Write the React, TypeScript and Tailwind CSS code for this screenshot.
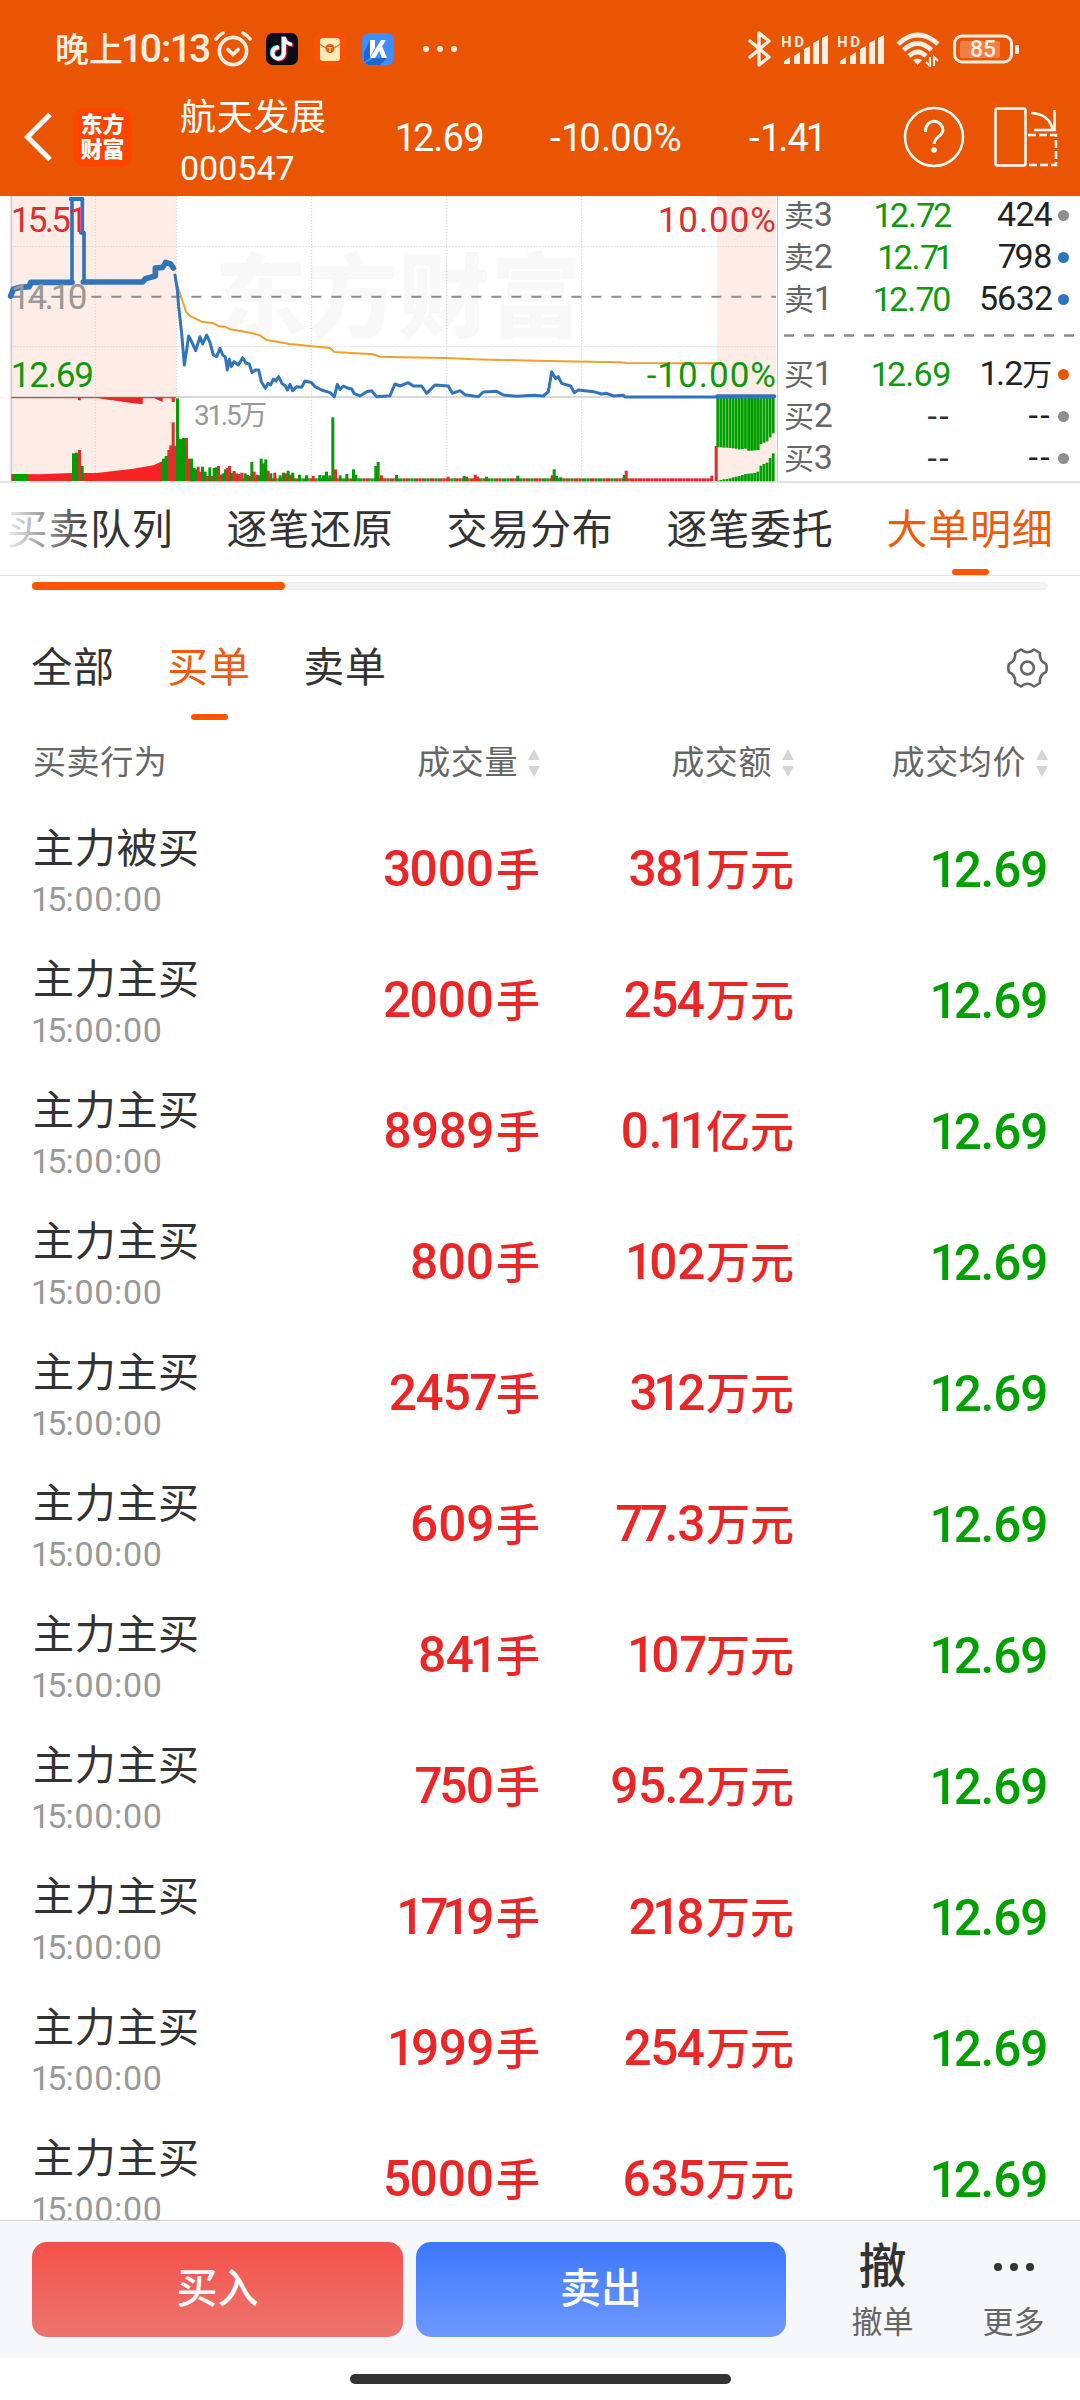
import React from "react";

type Trade = { action: string; volume: string; amount: string; unit: string };

const trades: Trade[] = [
  { action: "主力被买", volume: "3000", amount: "381", unit: "万元" },
  { action: "主力主买", volume: "2000", amount: "254", unit: "万元" },
  { action: "主力主买", volume: "8989", amount: "0.11", unit: "亿元" },
  { action: "主力主买", volume: "800", amount: "102", unit: "万元" },
  { action: "主力主买", volume: "2457", amount: "312", unit: "万元" },
  { action: "主力主买", volume: "609", amount: "77.3", unit: "万元" },
  { action: "主力主买", volume: "841", amount: "107", unit: "万元" },
  { action: "主力主买", volume: "750", amount: "95.2", unit: "万元" },
  { action: "主力主买", volume: "1719", amount: "218", unit: "万元" },
  { action: "主力主买", volume: "1999", amount: "254", unit: "万元" },
  { action: "主力主买", volume: "5000", amount: "635", unit: "万元" },
];

const sells = [
  { label: "卖", level: "3", price: "12.72", count: "424", unit: "", dot: "bg-[#8e8e93]" },
  { label: "卖", level: "2", price: "12.71", count: "798", unit: "", dot: "bg-[#2f74c0]" },
  { label: "卖", level: "1", price: "12.70", count: "5632", unit: "", dot: "bg-[#2f74c0]" },
];

const buys = [
  { label: "买", level: "1", price: "12.69", count: "1.2", unit: "万", dot: "bg-[#ea5504]" },
  { label: "买", level: "2", price: "--", count: "--", unit: "", dot: "bg-[#8e8e93]" },
  { label: "买", level: "3", price: "--", count: "--", unit: "", dot: "bg-[#8e8e93]" },
];

const tabs = ["买卖队列", "逐笔还原", "交易分布", "逐笔委托", "大单明细"];
const filters = ["全部", "买单", "卖单"];

const spacing: Record<string, string> = {
  "1": "-ml-[0.06em] tracking-[-0.08em]",
  "2": "tracking-[-0.03em]",
  "3": "tracking-[-0.03em]",
  "4": "tracking-[-0.02em]",
  "5": "tracking-[-0.03em]",
  "7": "tracking-[-0.07em]",
  "8": "tracking-[-0.01em]",
  "9": "tracking-[-0.01em]",
  ".": "tracking-[-0.02em]",
  ":": "tracking-[0.02em]",
  "-": "tracking-[0.07em]",
};

const Num: React.FC<{ value: string }> = ({ value }) => (
  <span>
    {value.split("").map((c, i) => (
      <span key={i} className={spacing[c]}>
        {c}
      </span>
    ))}
  </span>
);

const Signal = () => (
  <svg width="46" height="34" viewBox="0 0 46 34" fill="#ffeee3">
    <text x="-1" y="14.5" fontSize="15" fontWeight="700" textLength="23" fontFamily="Roboto, sans-serif">HD</text>
    <path d="M2 29l6-4v7H2zM12 24l6-4v12h-6zM22 17l6-3v18h-6zM31 11l6-3v24h-6zM40 6l6-3v29h-6z" />
  </svg>
);

const StatusBar = () => (
  <div className="flex h-[98px] items-center pl-[55px] pr-[61px] text-[#ffeee3]">
    <div className="flex w-[159px] items-baseline whitespace-nowrap font-medium">
      <span className="text-[34px] leading-[48px]">晚上</span>
      <span className="text-[39px] leading-[48px] tracking-[-0.02em]">
        <Num value="10:13" />
      </span>
    </div>
    <svg width="38" height="36" viewBox="0 0 38 36" fill="none" stroke="currentColor" strokeWidth="3.6" strokeLinecap="round">
      <circle cx="19" cy="20" r="13.6" />
      <path d="M2 8q3-4 7-6M36 8q-3-4-7-6M14 18.5l5 5 5-5" />
    </svg>
    <svg className="ml-[14px]" width="32" height="32" viewBox="0 0 32 32" fill="none">
      <rect width="32" height="32" rx="7" fill="#0b0b18" />
      <g strokeWidth="3.6">
        <path d="M13 14.5a5.7 5.7 0 1 0 5 5.7V4" stroke="#25f4ee" transform="translate(-1 -.6)" />
        <path d="M13 14.5a5.7 5.7 0 1 0 5 5.7V4q1 6.5 8 7.5" stroke="#fe2c55" transform="translate(1 .8)" />
        <path d="M13 14.5a5.7 5.7 0 1 0 5 5.7V4q1 6.5 8 7.5" stroke="#fff" />
      </g>
    </svg>
    <svg className="ml-4" width="32" height="32" viewBox="0 0 32 32">
      <rect width="32" height="32" rx="7" fill="#ff4e08" />
      <rect x="6" y="5" width="20" height="23" rx="3" fill="#ffe9b5" />
      <path d="M6 11q10 9 20 0" fill="none" stroke="#d9772b" strokeWidth="1.2" />
      <circle cx="16" cy="15.5" r="4.5" fill="#e85a16" />
      <text x="16" y="18.5" fontSize="8" fontWeight="700" fill="#ffe9b5" textAnchor="middle">T</text>
    </svg>
    <svg className="ml-4" width="32" height="32" viewBox="0 0 32 32">
      <rect width="32" height="32" rx="7" fill="#3f8cff" />
      <path d="M8 7v18L2 29v-9zM12 25h13l-7 7H7a7 7 0 0 1-4-2z" fill="#1f66cf" />
      <path d="M8 7h5v8l-5 9zM19 7h5L13 25H8zM17 17l3-4 5 12h-5z" fill="#fff" />
    </svg>
    <div className="ml-[29px] flex gap-2">
      <i className="size-[6px] rounded-full bg-current" />
      <i className="size-[6px] rounded-full bg-current" />
      <i className="size-[6px] rounded-full bg-current" />
    </div>
    <div className="ml-auto flex items-center">
      <svg width="24" height="38" viewBox="0 0 24 38" fill="none" stroke="currentColor" strokeWidth="3.4" strokeLinejoin="round" strokeLinecap="round">
        <path d="M2 11l19 16-10 8V3l10 8L2 27" />
      </svg>
      <div className="ml-[10px] flex gap-[10px]">
        <Signal />
        <Signal />
      </div>
      <svg className="ml-[12px]" width="44" height="36" viewBox="0 0 44 36" fill="none" stroke="currentColor" strokeWidth="4.6">
        <path d="M2 13q20-18 40 0M7.5 19q14-13 28 0M13 25q8.5-8 17 0" />
        <path d="M17 29q4.5-3 9 0l-4.5 5z" fill="currentColor" stroke="none" />
        <path d="M34 26v9l-4-4M38 35v-9l4 4" strokeWidth="2.2" />
      </svg>
      <svg className="ml-[13px]" width="66" height="30" viewBox="0 0 66 30">
        <rect x="1.5" y="2" width="57" height="26" rx="7.5" fill="none" stroke="currentColor" strokeWidth="3" />
        <rect x="7" y="7" width="40" height="17" rx="2" fill="#fff" opacity=".25" />
        <rect x="62" y="11" width="4" height="9" rx="1.5" fill="currentColor" />
        <text x="30" y="23" fontSize="23" fontWeight="500" fill="currentColor" textAnchor="middle" textLength="26">85</text>
      </svg>
    </div>
  </div>
);

const TitleBar = () => (
  <div className="flex h-[98px] items-center pl-6 pr-[21px] pb-[20px] text-white">
    <svg width="28" height="50" viewBox="0 0 28 50" fill="none" stroke="currentColor" strokeWidth="5">
      <path d="M26 2.5L3.5 25 26 47.5" />
    </svg>
    <div className="ml-[21px] flex h-[59px] w-[59px] flex-col items-center justify-center rounded-[12px] bg-[#ff4400] text-[22px] font-black leading-[25px]">
      <span>东方</span>
      <span>财富</span>
    </div>
    <div className="ml-[48px] flex w-[217px] flex-col pt-[11px]">
      <span className="text-[36px] leading-[50px] tracking-[0.7px]">航天发展</span>
      <span className="text-[34px] leading-[50px]">000547</span>
    </div>
    <div className="flex items-center whitespace-nowrap pt-[2px] text-[38px] leading-[50px] tracking-[-0.02em]">
      <span className="w-[153px]"><Num value="12.69" /></span>
      <span className="w-[199px] tracking-[0.01em]"><Num value="-10.00%" /></span>
      <span><Num value="-1.41" /></span>
    </div>
    <svg className="ml-auto" width="62" height="62" viewBox="0 0 62 62" fill="none" stroke="currentColor" strokeWidth="2.5">
      <circle cx="31" cy="31" r="29" />
      <path d="M22.5 26v-2a8.7 8.7 0 0 1 17.4 0c0 6.5-8.7 6.5-8.7 14" strokeWidth="3" />
      <circle cx="31" cy="44" r="2.8" fill="currentColor" stroke="none" />
    </svg>
    <svg className="ml-[29px]" width="65" height="60" viewBox="0 0 65 60" fill="none" stroke="currentColor" strokeWidth="2.5">
      <rect x="1.5" y="1.5" width="30" height="57" rx="2" />
      <path d="M37 6q19 1 22 18M60.5 3v20H40" />
      <path d="M34 28h28v30H34" strokeDasharray="8 3" />
    </svg>
  </div>
);

// Volume bars: x, top, colour (r = up, g = down)
const volume: [number, number, string][] = [
  [216, 790, "g"], [225, 788, "g"], [234, 780, "r"], [242, 828, "g"],
  [486, 806, "g"], [494, 798, "g"], [502, 780, "r"], [508, 766, "r"], [515, 697, "r"], [521, 768, "r"],
  [528, 625, "g"], [537, 747, "g"], [546, 744, "g"], [555, 744, "r"], [564, 806, "r"], [570, 806, "g"],
  [578, 834, "g"], [585, 838, "g"], [590, 830, "r"], [597, 845, "r"], [603, 830, "g"], [611, 845, "g"], [618, 858, "r"],
  [625, 832, "g"], [632, 858, "r"], [638, 834, "g"], [644, 832, "g"], [651, 828, "r"], [658, 854, "r"],
  [665, 850, "g"], [672, 838, "g"], [678, 834, "r"], [684, 828, "r"], [691, 848, "g"], [698, 843, "r"],
  [705, 850, "r"], [713, 852, "r"], [721, 848, "r"], [731, 850, "g"], [738, 855, "g"], [745, 858, "r"],
  [751, 816, "g"], [758, 845, "r"], [766, 854, "r"], [773, 856, "g"], [779, 806, "g"], [786, 820, "g"],
  [793, 808, "g"], [800, 842, "r"], [808, 850, "g"], [820, 848, "r"], [836, 856, "g"], [846, 848, "g"],
  [853, 850, "r"], [860, 842, "g"], [867, 854, "r"], [874, 848, "g"], [894, 854, "g"], [915, 856, "g"],
  [935, 858, "r"], [955, 855, "g"], [966, 856, "g"], [975, 845, "g"], [985, 856, "g"], [994, 682, "g"],
  [1002, 838, "r"], [1016, 856, "g"], [1036, 852, "g"], [1056, 838, "g"], [1063, 854, "g"], [1123, 828, "g"],
  [1130, 816, "g"], [1140, 856, "r"], [1185, 855, "g"], [1340, 860, "r"], [1388, 858, "g"], [1395, 860, "r"],
  [1421, 854, "r"], [1428, 860, "r"], [1455, 860, "g"], [1549, 857, "g"], [1652, 856, "r"], [1658, 838, "g"],
  [1665, 858, "g"], [1678, 862, "g"], [1868, 855, "g"], [1874, 842, "r"], [2131, 857, "r"], [2144, 768, "r"],
];

// Closing auction: matched (top) and unmatched (bottom) bars
const hanging = [772, 772, 773, 773, 774, 775, 776, 778, 777, 776, 782, 782, 781, 780, 762, 758, 754, 742, 730];
const rising = [872, 870, 868, 867, 865, 862, 860, 858, 855, 852, 851, 850, 849, 845, 827, 822, 818, 804, 790];

const Chart = () => (
  <svg className="shrink-0" width="777" height="287" viewBox="0 18 2331 861" fontFamily="Roboto, 'Noto Sans CJK SC', sans-serif">
    <rect x="34" y="18" width="494" height="858" fill="#feede6" />
    <rect x="2151" y="18" width="177" height="858" fill="#feede6" />
    <text x="645" y="420" fontSize="274" fontWeight="900" fill="#f8f8f8" textLength="1100">东方财富</text>
    <g stroke="#d2d2d2" strokeWidth="3" strokeDasharray="4 5">
      <path d="M286 18V876M529 18V876M935 18V876M1340 18V876M1745 18V876M34 170H2328M34 470H2328" />
    </g>
    <path d="M34 18V876M34 621H2328" stroke="#ccc" strokeWidth="5" />
    <path d="M34 320H2328" stroke="#8b8b8b" strokeWidth="6" strokeDasharray="30 30" />

    <path d="M34 852L120 853 210 849 290 849 400 836 460 826 490 812 528 766V873H34z" fill="#f52323" />
    <path d="M38 852h46v21H38z" fill="#00a000" />
    <path d="M34 621H528v4H34z" fill="#d84a4a" />
    <path d="M290 623H428v20q-80-10-138-20zM466 623h22v13l-22-10zM515 623h9v13h-9zM234 623h8v8h-8z" fill="#ee2222" />
    {Array.from({ length: 196 }, (_, i) => (
      <rect
        key={i}
        x={568 + i * 8}
        y={865}
        width={8}
        height={9}
        fill={i > 163 || i % 5 < 2 || i % 7 === 3 ? "#d93030" : "#1c9a1c"}
      />
    ))}
    {volume.map(([x, y, c], i) => (
      <rect key={i} x={x} y={y} width={9} height={873 - y} fill={c === "r" ? "#e02d2d" : "#079a07"} />
    ))}
    {hanging.map((y, i) => (
      <rect key={i} x={2149 + i * 9.25} y={622} width={i > 9 && i < 14 ? 9.5 : 8.3} height={y - 622} fill="#00a000" />
    ))}
    {rising.map((y, i) => (
      <rect key={i} x={2149 + i * 9.25} y={y} width={8.3} height={874 - y} fill="#00a000" />
    ))}

    <polyline
      points="528,275 540,310 558,365 570,378 605,395 640,400 655,408 675,410 690,418 750,428 780,436 800,450 870,462 990,474 1003,486 1120,493 1140,500 1200,502 1340,504 1420,508 1640,513 1860,517 1880,519 2151,520"
      fill="none"
      stroke="#f0a02c"
      strokeWidth="6"
    />
    <g fill="none" stroke="#3074bd" strokeLinejoin="round" strokeLinecap="round">
      <path d="M32 318L40 298 60 292 88 290 92 277H216M250 276H428L436 266 466 258V234L488 232 497 217 512 222 520 234" strokeWidth="17" />
      <path d="M216 277V27H247V128M252 128V276" strokeWidth="11" />
      <path d="M212 27H247M243 128h6" strokeWidth="12" />
      <polyline
        points="525,255 532,300 536,350 545,430 553,525 560,480 566,438 575,455 587,482 600,440 608,462 620,435 630,458 640,495 650,500 660,475 668,495 676,500 682,540 688,508 694,530 702,515 715,525 728,503 738,520 748,522 756,548 766,540 776,540 784,575 796,595 804,580 812,585 820,567 828,573 836,560 846,580 856,588 862,600 870,583 878,602 890,590 905,592 915,573 935,578 945,590 965,600 990,608 1003,620 1012,583 1020,598 1030,588 1045,595 1055,597 1062,610 1080,618 1100,605 1115,602 1130,620 1170,617 1185,582 1200,588 1225,578 1240,588 1265,588 1280,610 1305,585 1345,588 1357,610 1380,602 1395,614 1435,620 1450,606 1490,604 1510,615 1550,619 1600,616 1630,618 1645,605 1655,545 1667,566 1675,560 1685,580 1712,588 1723,608 1735,600 1780,605 1805,612 1820,610 1840,618 1870,616 1875,621 2148,621"
        strokeWidth="9"
      />
      <path d="M2152 619H2322" strokeWidth="13" />
    </g>

    <g fontSize="105">
      <text x="32" y="126" fill="#dc2f2f" textLength="232">15.51</text>
      <text x="32" y="357" fill="#999" textLength="230">14.10</text>
      <text x="32" y="592" fill="#0c9a0c" textLength="250">12.69</text>
      <text x="1973" y="126" fill="#dc2f2f" textLength="355">10.00%</text>
      <text x="1940" y="592" fill="#0c9a0c" textLength="388">-10.00%</text>
      <text x="582" y="706" fontSize="84" fill="#999" textLength="220">31.5万</text>
    </g>
  </svg>
);

const OrderRow: React.FC<{ row: (typeof sells)[number] }> = ({ row }) => (
  <div className="flex h-[42px] items-center whitespace-nowrap text-[34px] leading-[42px] tracking-[-0.01em]">
    <span className="w-[65px] text-[#666]">
      <span className="text-[30px]">{row.label}</span>
      {row.level}
    </span>
    <span className="w-[102px] text-right text-[#0c9a0c]">
      <span className={row.price === "--" ? "text-[#333]" : ""}>
        <Num value={row.price} />
      </span>
    </span>
    <span className="w-[101px] text-right text-[#222]">
      <Num value={row.count} />
      <span className="text-[30px]">{row.unit}</span>
    </span>
    <i className={`ml-[6px] size-[11px] rounded-full ${row.dot}`} />
  </div>
);

const Quote = () => (
  <div className="flex h-[287px] border-b-2 border-[#e2e2e2]">
    <Chart />
    <div className="flex flex-1 flex-col overflow-hidden border-l border-[#c4c4c4] pl-[6px]">
      <div className="-mt-[2px] shrink-0">
        {sells.map((row) => (
          <OrderRow key={row.level} row={row} />
        ))}
      </div>
      <svg className="mt-[14px] mb-[16px] shrink-0" width="295" height="3">
        <path d="M0 1.5H295" stroke="#8b8b8b" strokeWidth="2.5" strokeDasharray="10 10" />
      </svg>
      <div className="shrink-0">
        {buys.map((row) => (
          <OrderRow key={row.level} row={row} />
        ))}
      </div>
    </div>
  </div>
);

const Sorter = () => (
  <svg className="ml-[10px]" width="12" height="28" viewBox="0 0 12 28" fill="#d6d6d6">
    <path d="M6 0l6 11H0zM6 28l6-11H0z" />
  </svg>
);

const App: React.FC = () => {
  return (
    <div className="flex h-[2400px] w-[1080px] flex-col overflow-hidden bg-white font-[Roboto,'Noto_Sans_CJK_SC',sans-serif] text-[#333]">
      <header className="h-[196px] shrink-0 bg-[#ea5504]">
        <StatusBar />
        <TitleBar />
      </header>

      <Quote />

      {/* Detail tabs */}
      <nav className="relative flex h-[93px] shrink-0 justify-between border-b border-[#e0e0e0] pl-[6px] pr-[26px] text-[41px] tracking-[0.7px]">
        {tabs.map((tab) => (
          <div
            key={tab}
            className={`flex w-[168px] flex-col items-center justify-between whitespace-nowrap pt-[16px] ${tab === "大单明细" ? "text-[#f05a0a]" : ""}`}
          >
            <span className="leading-[62px]">{tab}</span>
            {tab === "大单明细" && <i className="h-[6px] w-[37px] rounded-full bg-[#ff5500]" />}
          </div>
        ))}
        <div className="absolute inset-y-0 left-0 w-[90px] bg-linear-to-r from-white to-transparent" />
      </nav>

      <div className="mx-8 mt-[6px] h-2 shrink-0 rounded-full bg-[#f2f2f5]">
        <div className="h-2 w-[253px] rounded-full bg-[#ff5500]" />
      </div>

      {/* Order side filter */}
      <div className="flex h-[130px] shrink-0 items-end pl-[32px] pr-8">
        <div className="flex gap-[54px] whitespace-nowrap text-[41px] tracking-[0.7px]">
          {filters.map((f) => (
            <div key={f} className={`flex h-[86px] w-[82px] flex-col items-center ${f === "买单" ? "text-[#f05a0a]" : ""}`}>
              <span className="leading-[68px]">{f}</span>
              {f === "买单" && <i className="mt-auto h-[6px] w-[37px] rounded-full bg-[#ff5500]" />}
            </div>
          ))}
        </div>
        <svg className="mb-[32px] ml-auto" width="41" height="40" viewBox="0 0 41 40" fill="none" stroke="#666" strokeWidth="2.6" strokeLinejoin="round">
          <path d="M14 1.5Q20.500 7 27 1.500L33 5Q32 13 39 16Q40.500 20 39 24Q32 27 33 35L27 38.500Q20.500 33 14 38.500L8 35Q9 27 2 24Q.5 20 2 16Q9 13 8 5Z" />
          <circle cx="20.5" cy="20" r="6.4" />
        </svg>
      </div>

      {/* Column heads */}
      <div className="flex h-[84px] shrink-0 items-center pl-[33px] pr-8 pt-px text-[33px] tracking-[0.6px] text-[#666]">
        <span className="w-[220px]">买卖行为</span>
        <span className="flex w-[287px] items-center justify-end">成交量<Sorter /></span>
        <span className="flex w-[254px] items-center justify-end">成交额<Sorter /></span>
        <span className="flex w-[254px] items-center justify-end">成交均价<Sorter /></span>
      </div>

      {/* Trades */}
      <div className="flex-1 overflow-hidden">
        {trades.map((t, i) => (
          <div key={i} className="flex h-[131px] items-center pl-[33px] pr-8 text-[49.5px] font-medium leading-[60px]">
            <div className="flex w-[200px] flex-col pt-[8px] font-normal leading-[50px]">
              <span className="text-[41px] tracking-[0.7px]">{t.action}</span>
              <span className="text-[34px] tracking-[0.02em] text-[#999]"><Num value="15:00:00" /></span>
            </div>
            <span className="w-[307px] text-right text-[#ea2626]">
              <Num value={t.volume} />
              <span className="ml-[2px] text-[44px]">手</span>
            </span>
            <span className="w-[254px] text-right text-[#ea2626]">
              <Num value={t.amount} />
              <span className="ml-[2px] text-[44px]">{t.unit}</span>
            </span>
            <span className="w-[254px] text-right tracking-[-0.02em] text-[#00a000]">
              <Num value="12.69" />
            </span>
          </div>
        ))}
      </div>

      {/* Trade actions */}
      <footer className="flex h-[138px] shrink-0 border-t border-[#d3d3d6] bg-[#f6f7fa] pl-8 pt-[21px]">
        <button className="h-[95px] w-[371px] rounded-[15px] bg-linear-to-b from-[#f4504a] to-[#eb746e] pt-px text-[41px] font-medium text-white">买入</button>
        <button className="ml-[13px] h-[95px] w-[370px] rounded-[15px] bg-linear-to-b from-[#3b77fb] to-[#6e99ff] pt-px text-[41px] font-medium text-white">卖出</button>
        <div className="ml-[31px] flex w-[131px] flex-col items-center">
          <span className="pt-px text-[48px] font-medium leading-[48px]">撤</span>
          <span className="mt-[13px] text-[31px] leading-[38px] text-[#666]">撤单</span>
        </div>
        <div className="flex w-[131px] flex-col items-center">
          <div className="flex h-[49px] items-center gap-2">
            <i className="size-2 rounded-full bg-[#333]" />
            <i className="size-2 rounded-full bg-[#333]" />
            <i className="size-2 rounded-full bg-[#333]" />
          </div>
          <span className="mt-[13px] text-[31px] leading-[38px] text-[#666]">更多</span>
        </div>
      </footer>
      <div className="flex h-[42px] shrink-0 justify-center bg-white pt-4">
        <div className="h-[10px] w-[381px] rounded-full bg-[#333]" />
      </div>
    </div>
  );
};

export default App;
